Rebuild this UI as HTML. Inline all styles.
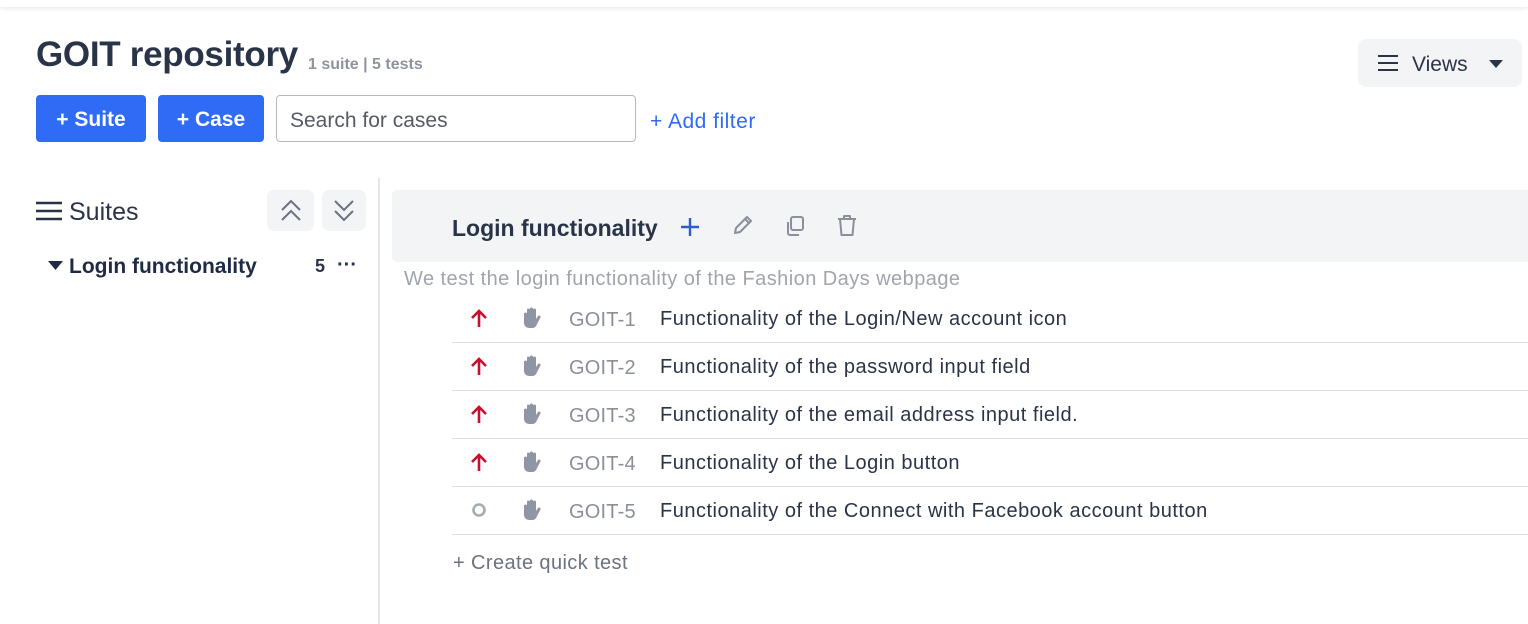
<!DOCTYPE html>
<html><head><meta charset="utf-8"><style>
*{box-sizing:border-box;margin:0;padding:0}
body{width:1528px;height:624px;overflow:hidden;background:#fff;font-family:"Liberation Sans",sans-serif;position:relative;color:#1f2a44}
.a{position:absolute;white-space:nowrap}
.topbar{position:absolute;left:0;top:0;width:1528px;height:7px;box-shadow:0 2px 4px rgba(0,0,0,.08);background:#fff}
.btn{position:absolute;top:95px;height:47px;background:#2f6bf5;border-radius:4px;color:#fff;font-size:21px;font-weight:bold;display:flex;align-items:center;justify-content:center;padding-top:2px}
.row{position:absolute;left:452px;width:1076px;height:48px;border-bottom:1px solid #dcdfe4}
.row .id{position:absolute;left:117px;top:14px;font-size:20px;color:#8a8f99;letter-spacing:0.2px}
.row .t{position:absolute;left:208px;top:13px;font-size:20px;color:#2a3448;letter-spacing:0.5px}
.row svg{position:absolute}
</style></head><body>
<div class="topbar"></div>
<div class="a" style="left:36px;top:35px;font-size:35px;font-weight:bold;color:#2a3448;letter-spacing:-0.3px">GOIT repository</div>
<div class="a" style="left:308px;top:56px;font-size:16px;font-weight:bold;color:#8e949e">1 suite | 5 tests</div>
<div class="a" style="left:1358px;top:39px;width:164px;height:48px;background:#f3f4f6;border-radius:8px"></div>
<svg class="a" style="left:1377px;top:54px" width="22" height="18"><path d="M1 2h20M1 9h20M1 16h20" stroke="#2a3448" stroke-width="2"/></svg>
<div class="a" style="left:1412px;top:53px;font-size:21px;color:#2a3448">Views</div>
<svg class="a" style="left:1489px;top:60px" width="14" height="9"><path d="M0 0h14L7 8z" fill="#2a3448"/></svg>
<div class="btn" style="left:36px;width:110px">+ Suite</div>
<div class="btn" style="left:158px;width:106px">+ Case</div>
<div class="a" style="left:276px;top:95px;width:360px;height:47px;border:1px solid #b4b8bf;border-radius:4px"></div>
<div class="a" style="left:290px;top:109px;font-size:21px;color:#555b66">Search for cases</div>
<div class="a" style="left:650px;top:110px;font-size:21px;color:#2f6bf5;letter-spacing:0.5px">+ Add filter</div>
<svg class="a" style="left:36px;top:201px" width="26" height="20"><path d="M0 2h26M0 10h26M0 18h26" stroke="#2a3448" stroke-width="2.4"/></svg>
<div class="a" style="left:69px;top:198px;font-size:25px;color:#2a3448">Suites</div>
<div class="a" style="left:267px;top:190px;width:47px;height:41px;background:#f3f4f6;border-radius:7px"></div>
<svg class="a" style="left:280px;top:199px" width="22" height="24"><path d="M2 11l9-9 9 9M2 21l9-9 9 9" stroke="#6b7280" stroke-width="2" fill="none"/></svg>
<div class="a" style="left:322px;top:190px;width:44px;height:41px;background:#f3f4f6;border-radius:7px"></div>
<svg class="a" style="left:333px;top:199px" width="22" height="24"><path d="M2 2l9 9 9-9M2 12l9 9 9-9" stroke="#6b7280" stroke-width="2" fill="none"/></svg>
<svg class="a" style="left:48px;top:261px" width="15" height="10"><path d="M0 0h15L7.5 9z" fill="#1f2a44"/></svg>
<div class="a" style="left:69px;top:255px;font-size:21px;font-weight:bold;color:#1f2a44">Login functionality</div>
<div class="a" style="left:315px;top:256px;font-size:18px;font-weight:bold;color:#2a3448">5</div>
<div class="a" style="left:337px;top:254px;font-size:20px;font-weight:bold;color:#2a3448">&middot;&middot;&middot;</div>
<div class="a" style="left:378px;top:178px;width:2px;height:446px;background:#e3e5e8"></div>
<div class="a" style="left:392px;top:190px;width:1136px;height:72px;background:#f3f4f6;border-radius:5px 0 0 5px"></div>
<div class="a" style="left:452px;top:215px;font-size:23px;font-weight:bold;color:#2a3448">Login functionality</div>
<svg class="a" style="left:680px;top:217px" width="20" height="20"><path d="M10 1v18M1 10h18" stroke="#2f5bd0" stroke-width="2.4"/></svg>
<svg class="a" style="left:731px;top:215px" width="22" height="22"><path d="M4 18l1-5L16 2l4 4L9 17z M14 4l4 4" stroke="#8a8f99" stroke-width="2" fill="none" stroke-linejoin="round"/></svg>
<svg class="a" style="left:784px;top:215px" width="22" height="22"><rect x="7" y="2" width="12" height="13" rx="2" stroke="#8a8f99" stroke-width="2" fill="none"/><path d="M4 7v11a2 2 0 0 0 2 2h9" stroke="#8a8f99" stroke-width="2" fill="none"/></svg>
<svg class="a" style="left:836px;top:214px" width="22" height="24"><path d="M2 5h18M8 5V2h6v3M4 5l1.5 16h11L18 5" stroke="#8a8f99" stroke-width="2" fill="none" stroke-linejoin="round"/></svg>
<div class="a" style="left:404px;top:268px;font-size:20px;color:#a0a5ad;letter-spacing:0.45px">We test the login functionality of the Fashion Days webpage</div>

<div class="row" style="top:295px"><svg style="left:18px;top:13px" width="18" height="20"><path d="M9 19V3M2 10l7-7 7 7" stroke="#c8102e" stroke-width="2.6" fill="none"/></svg><svg style="left:68px;top:12px" width="22" height="22"><path d="M4 12V7a1.5 1.5 0 0 1 3 0V3a1.5 1.5 0 0 1 3 0V2a1.5 1.5 0 0 1 3 0v1a1.5 1.5 0 0 1 3 0v9l2-3a1.5 1.5 0 0 1 2.5 1.5L16 19a4 4 0 0 1-3.5 2H9a5 5 0 0 1-5-5z" fill="#8e96a4"/></svg><div class="id">GOIT-1</div><div class="t">Functionality of the Login/New account icon</div></div>
<div class="row" style="top:343px"><svg style="left:18px;top:13px" width="18" height="20"><path d="M9 19V3M2 10l7-7 7 7" stroke="#c8102e" stroke-width="2.6" fill="none"/></svg><svg style="left:68px;top:12px" width="22" height="22"><path d="M4 12V7a1.5 1.5 0 0 1 3 0V3a1.5 1.5 0 0 1 3 0V2a1.5 1.5 0 0 1 3 0v1a1.5 1.5 0 0 1 3 0v9l2-3a1.5 1.5 0 0 1 2.5 1.5L16 19a4 4 0 0 1-3.5 2H9a5 5 0 0 1-5-5z" fill="#8e96a4"/></svg><div class="id">GOIT-2</div><div class="t">Functionality of the password input field</div></div>
<div class="row" style="top:391px"><svg style="left:18px;top:13px" width="18" height="20"><path d="M9 19V3M2 10l7-7 7 7" stroke="#c8102e" stroke-width="2.6" fill="none"/></svg><svg style="left:68px;top:12px" width="22" height="22"><path d="M4 12V7a1.5 1.5 0 0 1 3 0V3a1.5 1.5 0 0 1 3 0V2a1.5 1.5 0 0 1 3 0v1a1.5 1.5 0 0 1 3 0v9l2-3a1.5 1.5 0 0 1 2.5 1.5L16 19a4 4 0 0 1-3.5 2H9a5 5 0 0 1-5-5z" fill="#8e96a4"/></svg><div class="id">GOIT-3</div><div class="t">Functionality of the email address input field.</div></div>
<div class="row" style="top:439px"><svg style="left:18px;top:13px" width="18" height="20"><path d="M9 19V3M2 10l7-7 7 7" stroke="#c8102e" stroke-width="2.6" fill="none"/></svg><svg style="left:68px;top:12px" width="22" height="22"><path d="M4 12V7a1.5 1.5 0 0 1 3 0V3a1.5 1.5 0 0 1 3 0V2a1.5 1.5 0 0 1 3 0v1a1.5 1.5 0 0 1 3 0v9l2-3a1.5 1.5 0 0 1 2.5 1.5L16 19a4 4 0 0 1-3.5 2H9a5 5 0 0 1-5-5z" fill="#8e96a4"/></svg><div class="id">GOIT-4</div><div class="t">Functionality of the Login button</div></div>
<div class="row" style="top:487px"><svg style="left:19px;top:15px" width="16" height="16"><circle cx="8" cy="8" r="5.5" stroke="#a6abb3" stroke-width="2.6" fill="none"/></svg><svg style="left:68px;top:12px" width="22" height="22"><path d="M4 12V7a1.5 1.5 0 0 1 3 0V3a1.5 1.5 0 0 1 3 0V2a1.5 1.5 0 0 1 3 0v1a1.5 1.5 0 0 1 3 0v9l2-3a1.5 1.5 0 0 1 2.5 1.5L16 19a4 4 0 0 1-3.5 2H9a5 5 0 0 1-5-5z" fill="#8e96a4"/></svg><div class="id">GOIT-5</div><div class="t">Functionality of the Connect with Facebook account button</div></div>
<div class="a" style="left:453px;top:552px;font-size:20px;color:#6b7280;letter-spacing:0.4px">+ Create quick test</div>
</body></html>
